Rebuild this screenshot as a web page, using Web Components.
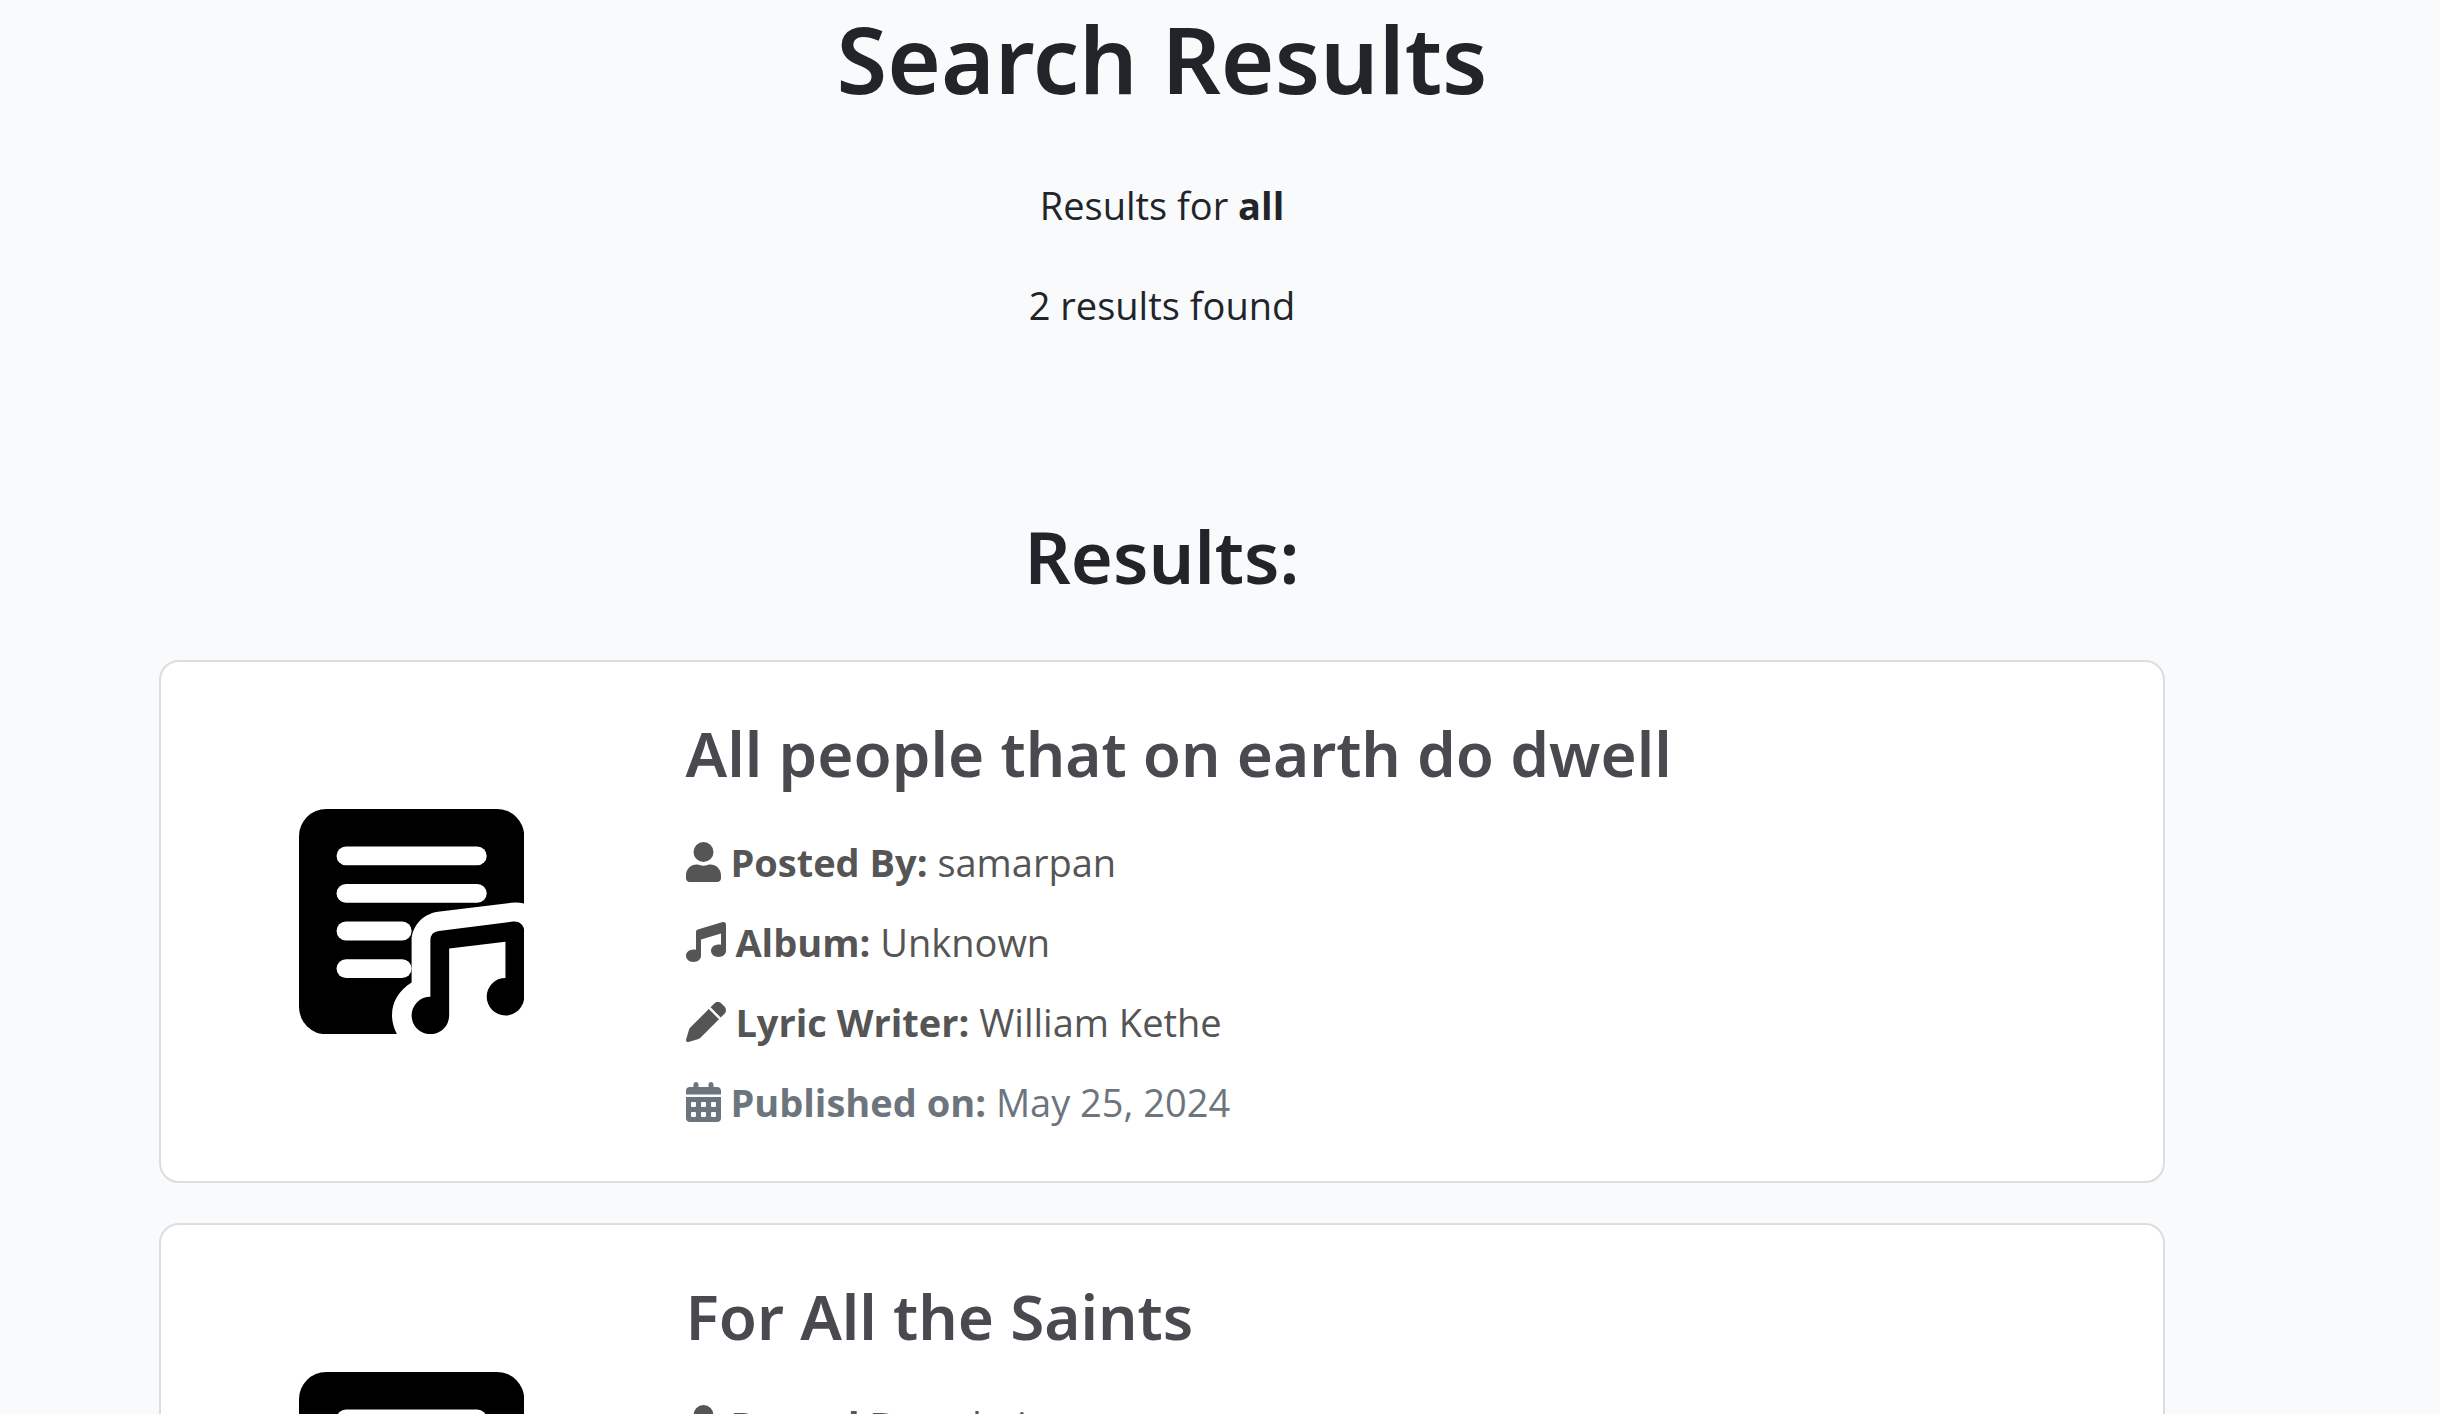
<!DOCTYPE html>
<html lang="en">
<head>
<meta charset="utf-8">
<title>Search Results</title>
<style>
  body { margin: 0; background: #f9fafc; color: #212529; font: 400 38px/60px "Open Sans", "Noto Sans", sans-serif; }
</style>
</head>
<body>
<search-page>
  <search-header slot="header" query="all" count="2"></search-header>
  <song-card>
    <span slot="title">All people that on earth do dwell</span>
    <song-fact icon="user" label="Posted By:">samarpan</song-fact>
    <song-fact icon="music" label="Album:">Unknown</song-fact>
    <song-fact icon="pen" label="Lyric Writer:">William Kethe</song-fact>
    <song-fact icon="calendar" label="Published on:" muted>May 25, 2024</song-fact>
  </song-card>
  <song-card>
    <span slot="title">For All the Saints</span>
    <song-fact icon="user" label="Posted By:">admin</song-fact>
  </song-card>
</search-page>

<template id="search-page">
  <style>
    :host { display: block; }
    main { padding: 0 275px 40px 159px; }
    h2 { margin: 0 0 56px; text-align: center; font: 600 72px/96px "Noto Sans", sans-serif; }
    .results { display: flex; flex-direction: column; gap: 40px; }
  </style>
  <main>
    <slot name="header"></slot>
    <h2>Results:</h2>
    <div class="results"><slot></slot></div>
  </main>
</template>

<template id="search-header">
  <style>
    :host { display: block; text-align: center; margin-bottom: 173px; }
    h1 { margin: 0 0 57px; font: 600 92px/118px "Noto Sans", sans-serif; }
    p { margin: 0; }
    p + p { margin-top: 40px; }
  </style>
  <h1>Search Results</h1>
  <p>Results for <strong class="query"></strong></p>
  <p class="count"></p>
</template>

<template id="song-card">
  <style>
    :host { display: block; }
    article { display: flex; background: #fff; border: 2px solid #dcddde; border-radius: 20px; }
    .cover { flex: 0 0 25%; display: flex; align-items: center; justify-content: center; }
    .cover svg { width: 45%; }
    .body { flex: 1; padding: 52px 24px 49px; }
    h3 { margin: 0 0 39px; color: #4a494f; font: 600 62px/79px "Noto Sans", sans-serif; }
    .facts { display: flex; flex-direction: column; gap: 20px; min-height: 300px; }
  </style>
  <article>
    <div class="cover">
      <svg viewBox="0 0 24 24" aria-hidden="true">
        <rect width="24" height="24" rx="2.9"/>
        <g fill="#fff">
          <rect x="4" y="4" width="16" height="2" rx="1"/>
          <rect x="4" y="8" width="16" height="2" rx="1"/>
          <rect x="4" y="12" width="8" height="2" rx="1"/>
          <rect x="4" y="16" width="8" height="2" rx="1"/>
          <path d="M24.1 10.1Q23.3 9.9 22.6 10L14.8 10.95C13.1 11.2 12 12.6 12 14V18.5C10 19.7 9.3 22 10.5 24.1H24.1Z"/>
        </g>
        <path d="M14 20V14Q14 13.1 14.9 13L22.8 12C23.5 11.9 24 12.4 24 13V20A2 2 0 1 1 22 18V14.15L16 14.87V22A2 2 0 1 1 14 20Z"/>
      </svg>
    </div>
    <div class="body">
      <h3><slot name="title"></slot></h3>
      <div class="facts"><slot></slot></div>
    </div>
  </article>
</template>

<template id="song-fact">
  <style>
    :host { display: block; color: #555; }
    :host([muted]) { color: #6c757d; }
    svg { height: 40px; vertical-align: -5px; fill: currentColor; }
  </style>
  <svg aria-hidden="true"><path/></svg>
  <strong></strong>
  <slot></slot>
</template>

<script>
  const ICONS = {
    user: [448, 'M224 256A128 128 0 1 0 224 0a128 128 0 1 0 0 256zM136 288C61 288 0 349 0 424v40c0 26 22 48 48 48h352c26 0 48-22 48-48v-40c0-75-61-136-136-136-17 0-25 3-36 7-34 12-70 12-104 0-11-4-19-7-36-7z'],
    music: [512, 'M499.100 6.300c8.100 6 12.900 15.600 12.900 25.700v336c0 44.200-43 80-96 80s-96-35.800-96-80s43-80 96-80c11.200 0 22 1.600 32 4.600V147L192 223.800V432c0 44.200-43 80-96 80s-96-35.800-96-80s43-80 96-80c11.200 0 22 1.600 32 4.600V128c0-14.100 9.300-26.600 22.800-30.700l320-96c9.700-2.900 20.200-1.100 28.300 5z'],
    pen: [512, 'M362.700 19.300L314.300 67.700 444.300 197.700l48.400-48.400c25-25 25-65.500 0-90.500L453.300 19.300c-25-25-65.500-25-90.500 0zm-71 71L58.600 323.500c-10.400 10.400-18 23.300-22.200 37.400L1 481.200C-1.500 489.700 .8 498.800 7 505s15.300 8.500 23.700 6.100l120.300-35.400c14.100-4.200 27-11.800 37.400-22.200L421.700 220.300 291.700 90.300z'],
    calendar: [448, 'M128 0c17.700 0 32 14.300 32 32V64H288V32c0-17.700 14.300-32 32-32s32 14.300 32 32V64h48c26.500 0 48 21.500 48 48v48H0V112C0 85.500 21.500 64 48 64H96V32c0-17.700 14.300-32 32-32zM0 192H448V464c0 26.500-21.500 48-48 48H48c-26.500 0-48-21.500-48-48V192zm64 80v32c0 8.800 7.200 16 16 16h32c8.800 0 16-7.200 16-16V272c0-8.800-7.200-16-16-16H80c-8.800 0-16 7.200-16 16zm128 0v32c0 8.800 7.200 16 16 16h32c8.800 0 16-7.200 16-16V272c0-8.800-7.200-16-16-16H208c-8.800 0-16 7.200-16 16zm144-16c-8.800 0-16 7.200-16 16v32c0 8.800 7.200 16 16 16h32c8.800 0 16-7.200 16-16V272c0-8.800-7.200-16-16-16H336zM64 400v32c0 8.800 7.200 16 16 16h32c8.800 0 16-7.200 16-16V400c0-8.800-7.200-16-16-16H80c-8.800 0-16 7.200-16 16zm144-16c-8.800 0-16 7.200-16 16v32c0 8.800 7.200 16 16 16h32c8.800 0 16-7.200 16-16V400c0-8.800-7.200-16-16-16H208zm112 16v32c0 8.800 7.200 16 16 16h32c8.800 0 16-7.200 16-16V400c0-8.800-7.200-16-16-16H336c-8.800 0-16 7.200-16 16z']
  };

  class TemplateElement extends HTMLElement {
    constructor() {
      super();
      this.attachShadow({ mode: 'open' })
        .append(document.getElementById(this.localName).content.cloneNode(true));
    }
    find(selector) { return this.shadowRoot.querySelector(selector); }
  }

  class SearchPage extends TemplateElement {}
  class SongCard extends TemplateElement {}

  class SearchHeader extends TemplateElement {
    connectedCallback() {
      this.find('.query').textContent = this.getAttribute('query');
      this.find('.count').textContent = `${this.getAttribute('count')} results found`;
    }
  }

  class SongFact extends TemplateElement {
    connectedCallback() {
      const [width, path] = ICONS[this.getAttribute('icon')];
      const svg = this.find('svg');
      svg.setAttribute('viewBox', `0 0 ${width} 512`);
      svg.style.width = `${Math.round(width * 40 / 512)}px`;
      this.find('path').setAttribute('d', path);
      this.find('strong').textContent = this.getAttribute('label');
    }
  }

  customElements.define('search-page', SearchPage);
  customElements.define('search-header', SearchHeader);
  customElements.define('song-card', SongCard);
  customElements.define('song-fact', SongFact);
</script>
</body>
</html>
